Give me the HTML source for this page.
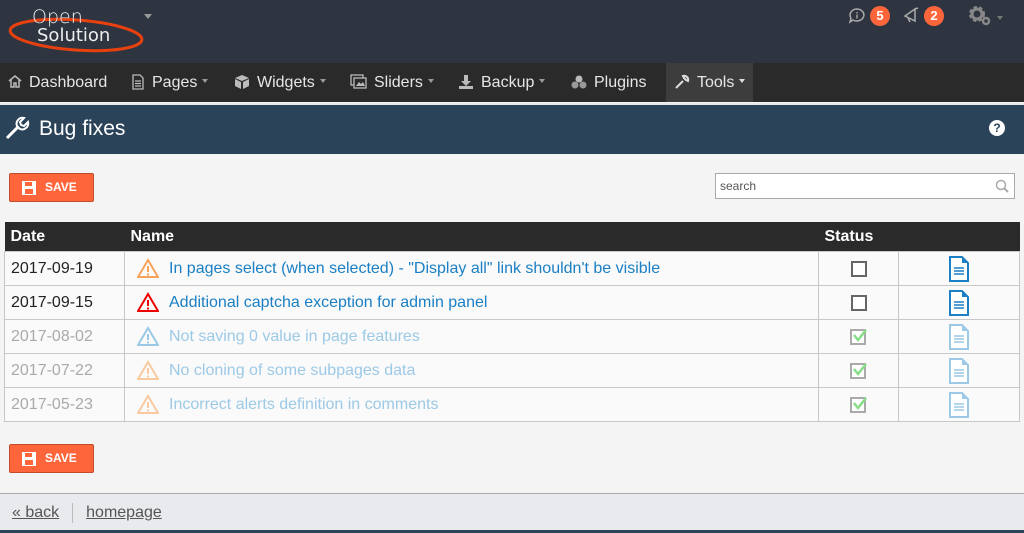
<!DOCTYPE html><html><head><style>
body{margin:0;width:1024px;height:533px;overflow:hidden;background:#f4f4f4;font-family:"Liberation Sans",sans-serif;position:relative}
.a{position:absolute}
#top{left:0;top:0;width:1024px;height:63px;background:#2e3540}
#nav{left:0;top:63px;width:1024px;height:39px;background:#2a2a2a}
.ni{position:absolute;top:0;height:39px;line-height:39px;color:#e6e6e6;font-size:16px}
.ni svg{position:absolute;top:11px}
.car{display:inline-block;border-left:3px solid transparent;border-right:3px solid transparent;border-top:4px solid #999;vertical-align:middle;margin-left:5px;margin-top:-3px}
#tb{left:0;top:103px;width:1024px;height:49px;background:#2b4359;border-top:2px solid #e8e8e8}
.btn{left:9px;width:83px;height:27px;background:#fe653b;border:1px solid #c14d2a;border-radius:2px;color:#fff;font-weight:bold;font-size:12px;line-height:27px}
.btn svg{position:absolute;left:11px;top:6px}
.btn span{position:absolute;left:35px}
table{position:absolute;left:4px;top:222px;width:1016px;border-collapse:collapse;font-size:16px;table-layout:fixed}
th{background:#2a2a2a;color:#fff;text-align:left;height:29px;padding:0 6px;font-weight:bold;line-height:29px}
td{border:1px solid #c8c8c8;height:33px;padding:0 6px;background:#fafafa;color:#222;line-height:33px;white-space:nowrap;overflow:hidden}
td.n{color:#1a7fc4;position:relative;padding-left:44px}
td.n svg{position:absolute;left:12px;top:6px}
td svg{vertical-align:middle}
tr.d td{color:#aaa}tr.d td.n{color:#9cc9e6}
</style></head><body>
<div class="a" id="top">
<svg class="a" style="left:4px;top:2px" width="142" height="52"><ellipse cx="72" cy="33" rx="66" ry="15" fill="none" stroke="#e8410f" stroke-width="3" transform="rotate(4 72 33)"/><text x="28" y="21" fill="#eee" font-family="DejaVu Sans" font-weight="200" font-size="19">Open</text><text x="33" y="39" fill="#eee" font-family="DejaVu Sans" font-size="18">Solution</text></svg>
<div class="a" style="left:144px;top:14px;border-left:4px solid transparent;border-right:4px solid transparent;border-top:5px solid #999"></div>
<svg class="a" style="left:848px;top:7px" width="18" height="18"><path d="M9 2a7 6 0 1 1-4 11l-3 2 1-4A7 6 0 0 1 9 2z" fill="none" stroke="#aaa" stroke-width="1.5"/><rect x="8.3" y="5" width="1.4" height="1.4" fill="#aaa"/><rect x="8.3" y="7.5" width="1.4" height="4" fill="#aaa"/></svg>
<div class="a" style="left:870px;top:6px;width:20px;height:20px;border-radius:10px;background:#fe653b;color:#fff;font-size:13px;font-weight:bold;text-align:center;line-height:20px">5</div>
<svg class="a" style="left:902px;top:6px" width="18" height="18"><path d="M3 10l10-7v12zM6 12l2 4M13 3l3-1" fill="none" stroke="#aaa" stroke-width="1.5"/></svg>
<div class="a" style="left:924px;top:6px;width:20px;height:20px;border-radius:10px;background:#fe653b;color:#fff;font-size:13px;font-weight:bold;text-align:center;line-height:20px">2</div>
<svg class="a" style="left:968px;top:5px" width="28" height="22"><circle cx="9" cy="9" r="6" fill="none" stroke="#888" stroke-width="4" stroke-dasharray="3 2"/><circle cx="9" cy="9" r="5" fill="none" stroke="#888" stroke-width="3"/><circle cx="18" cy="16" r="3" fill="none" stroke="#888" stroke-width="2.5"/></svg>
<div class="a" style="left:997px;top:16px;border-left:3px solid transparent;border-right:3px solid transparent;border-top:4px solid #777"></div>
</div>
<div class="a" id="nav">
<div class="ni" style="left:8px;padding-left:21px"><svg style="left:0" width="14" height="14"><path d="M1 7l6-5 6 5M3 6v7h3v-4h2v4h3V6" fill="none" stroke="#bbb" stroke-width="1.5"/></svg>Dashboard</div>
<div class="ni" style="left:131px;padding-left:21px"><svg style="left:0" width="14" height="16"><path d="M2 1h7l3 3v11H2z M4 7h6M4 9.5h6M4 12h6" fill="none" stroke="#bbb" stroke-width="1.3"/></svg>Pages<span class="car"></span></div>
<div class="ni" style="left:234px;padding-left:23px"><svg style="left:0" width="16" height="16"><path d="M8 1l7 3-7 3-7-3zM1 5l6 3v7l-6-3zM15 5l-6 3v7l6-3z" fill="#bbb"/></svg>Widgets<span class="car"></span></div>
<div class="ni" style="left:350px;padding-left:24px"><svg style="left:0" width="17" height="15"><rect x="1" y="1" width="12" height="10" fill="none" stroke="#bbb" stroke-width="1.3"/><rect x="4" y="4" width="12" height="10" fill="#2a2a2a" stroke="#bbb" stroke-width="1.3"/><path d="M6 12l3-4 2 2 2-2 2 4z" fill="#bbb"/></svg>Sliders<span class="car"></span></div>
<div class="ni" style="left:458px;padding-left:23px"><svg style="left:0" width="16" height="16"><path d="M6 1h4v6h3l-5 5-5-5h3zM1 12v3h14v-3" fill="#bbb"/></svg>Backup<span class="car"></span></div>
<div class="ni" style="left:570px;padding-left:24px"><svg style="left:0" width="18" height="16"><circle cx="9" cy="5" r="3.5" fill="#bbb"/><circle cx="5" cy="11" r="3.5" fill="#999"/><circle cx="13" cy="11" r="3.5" fill="#999"/></svg>Plugins</div>
<div class="ni" style="left:666px;width:87px;background:#3d3d3d"><svg style="left:8px" width="16" height="16"><path d="M2 14l7-7M9 2a4 4 0 0 1 5 5l-2-1-2-2z" fill="none" stroke="#ddd" stroke-width="2"/></svg><span style="position:absolute;left:31px">Tools<span class="car" style="border-top-color:#ddd"></span></span></div>
</div>
<div class="a" id="tb"><svg class="a" style="left:4px;top:10px" width="26" height="26"><path d="M3 23l11-11" stroke="#fff" stroke-width="3" fill="none"/><path d="M13 11a6 6 0 0 1 7-8l-4 4 1 3 3 1 4-4a6 6 0 0 1-8 7z" fill="none" stroke="#fff" stroke-width="2"/></svg><div class="a" style="left:39px;top:12px;color:#fff;font-size:21px">Bug fixes</div>
<div class="a" style="left:989px;top:15px;width:16px;height:16px;border-radius:8px;background:#fff;color:#2b4359;font-size:12px;font-weight:bold;text-align:center;line-height:16px">?</div></div>
<div class="a btn" style="top:173px"><svg width="16" height="16"><path d="M1 1h14v14H1z" fill="#fff"/><rect x="4" y="2" width="7" height="4" fill="#fe653b"/><rect x="4" y="9" width="8" height="5" fill="#fe653b"/></svg><span>SAVE</span></div>
<div class="a" style="left:715px;top:173px;width:298px;height:24px;border:1px solid #aaa;background:#fff;font-size:12px;color:#555;line-height:24px;text-indent:4px">search<svg style="position:absolute;right:5px;top:5px" width="14" height="14"><circle cx="6" cy="6" r="4.5" fill="none" stroke="#aaa" stroke-width="1.5"/><path d="M9 9l4 4" stroke="#aaa" stroke-width="2"/></svg></div>
<table><colgroup><col style="width:120px"><col><col style="width:80px"><col style="width:121px"></colgroup>
<tr><th>Date</th><th>Name</th><th>Status</th><th></th></tr>
<tr><td>2017-09-19</td><td class="n"><svg width="22" height="20"><path d="M11 2L1 19h20z" fill="none" stroke="#f7a35c" stroke-width="2"/><path d="M11 8v6M11 15.5v2" stroke="#f7a35c" stroke-width="2"/></svg>In pages select (when selected) - "Display all" link shouldn't be visible</td><td align=center><svg width="16" height="16"><rect x="1" y="1" width="14" height="14" fill="#fff" stroke="#666" stroke-width="2"/></svg></td><td align=center><svg width="20" height="26"><path d="M1 1h12l6 6v18H1z" fill="#fff" stroke="#1a7fc4" stroke-width="2"/><path d="M13 1v6h6z" fill="#1a7fc4"/><path d="M5 12h10M5 15h10M5 18h10" stroke="#1a7fc4" stroke-width="1.5"/></svg></td></tr>
<tr><td>2017-09-15</td><td class="n"><svg width="22" height="20"><path d="M11 2L1 19h20z" fill="none" stroke="#e00" stroke-width="2"/><path d="M11 8v6M11 15.5v2" stroke="#e00" stroke-width="2"/></svg>Additional captcha exception for admin panel</td><td align=center><svg width="16" height="16"><rect x="1" y="1" width="14" height="14" fill="#fff" stroke="#666" stroke-width="2"/></svg></td><td align=center><svg width="20" height="26"><path d="M1 1h12l6 6v18H1z" fill="#fff" stroke="#1a7fc4" stroke-width="2"/><path d="M13 1v6h6z" fill="#1a7fc4"/><path d="M5 12h10M5 15h10M5 18h10" stroke="#1a7fc4" stroke-width="1.5"/></svg></td></tr>
<tr class="d"><td>2017-08-02</td><td class="n"><svg width="22" height="20"><path d="M11 2L1 19h20z" fill="none" stroke="#9cc9e6" stroke-width="2"/><path d="M11 8v6M11 15.5v2" stroke="#9cc9e6" stroke-width="2"/></svg>Not saving 0 value in page features</td><td align=center><svg width="18" height="16"><rect x="1" y="1" width="14" height="14" fill="#fff" stroke="#aaa" stroke-width="2"/><path d="M4 6l4 5 8-10" fill="none" stroke="#8d8" stroke-width="2.5"/></svg></td><td align=center><svg width="20" height="26"><path d="M1 1h12l6 6v18H1z" fill="#fff" stroke="#9cc9e6" stroke-width="2"/><path d="M13 1v6h6z" fill="#9cc9e6"/><path d="M5 12h10M5 15h10M5 18h10" stroke="#9cc9e6" stroke-width="1.5"/></svg></td></tr>
<tr class="d"><td>2017-07-22</td><td class="n"><svg width="22" height="20"><path d="M11 2L1 19h20z" fill="none" stroke="#f9c9a0" stroke-width="2"/><path d="M11 8v6M11 15.5v2" stroke="#f9c9a0" stroke-width="2"/></svg>No cloning of some subpages data</td><td align=center><svg width="18" height="16"><rect x="1" y="1" width="14" height="14" fill="#fff" stroke="#aaa" stroke-width="2"/><path d="M4 6l4 5 8-10" fill="none" stroke="#8d8" stroke-width="2.5"/></svg></td><td align=center><svg width="20" height="26"><path d="M1 1h12l6 6v18H1z" fill="#fff" stroke="#9cc9e6" stroke-width="2"/><path d="M13 1v6h6z" fill="#9cc9e6"/><path d="M5 12h10M5 15h10M5 18h10" stroke="#9cc9e6" stroke-width="1.5"/></svg></td></tr>
<tr class="d"><td>2017-05-23</td><td class="n"><svg width="22" height="20"><path d="M11 2L1 19h20z" fill="none" stroke="#f9c9a0" stroke-width="2"/><path d="M11 8v6M11 15.5v2" stroke="#f9c9a0" stroke-width="2"/></svg>Incorrect alerts definition in comments</td><td align=center><svg width="18" height="16"><rect x="1" y="1" width="14" height="14" fill="#fff" stroke="#aaa" stroke-width="2"/><path d="M4 6l4 5 8-10" fill="none" stroke="#8d8" stroke-width="2.5"/></svg></td><td align=center><svg width="20" height="26"><path d="M1 1h12l6 6v18H1z" fill="#fff" stroke="#9cc9e6" stroke-width="2"/><path d="M13 1v6h6z" fill="#9cc9e6"/><path d="M5 12h10M5 15h10M5 18h10" stroke="#9cc9e6" stroke-width="1.5"/></svg></td></tr>
</table>
<div class="a btn" style="top:444px"><svg width="16" height="16"><path d="M1 1h14v14H1z" fill="#fff"/><rect x="4" y="2" width="7" height="4" fill="#fe653b"/><rect x="4" y="9" width="8" height="5" fill="#fe653b"/></svg><span>SAVE</span></div>
<div class="a" style="left:0;top:493px;width:1024px;height:37px;background:#e9eaed;border-top:1px solid #aaa;font-size:16px;color:#555;line-height:37px"><span style="margin-left:12px;text-decoration:underline">« back</span><span style="display:inline-block;width:1px;height:20px;background:#bbb;margin:0 13px;vertical-align:middle"></span><span style="text-decoration:underline">homepage</span></div>
<div class="a" style="left:0;top:530px;width:1024px;height:3px;background:#2b4359"></div>
</body></html>
